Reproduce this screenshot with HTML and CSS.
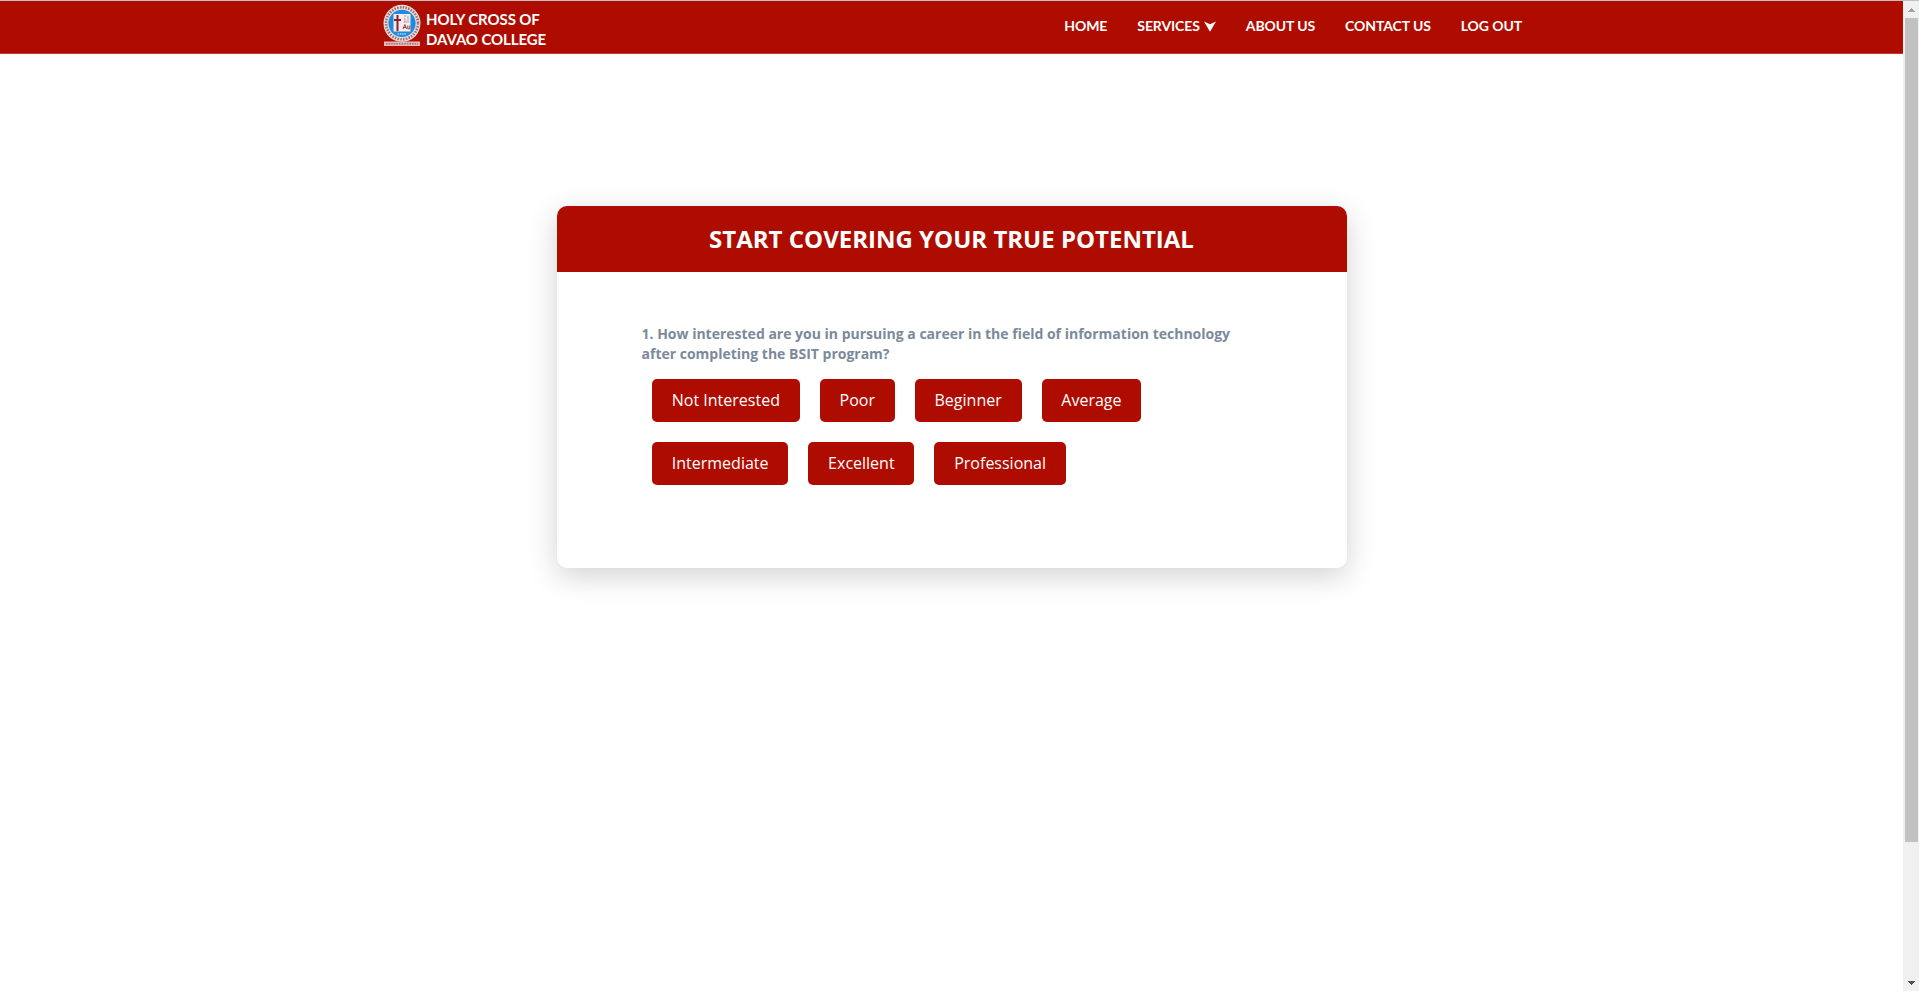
FILE: index.html
```html
<!DOCTYPE html>
<html lang="en">
<head>
<meta charset="utf-8">
<title>Holy Cross of Davao College</title>
<link rel="stylesheet" href="styles.css">
</head>
<body>
<div class="window">
  <div class="page">
    <header class="navbar">
      <a class="brand">
        <svg class="seal" viewBox="0 0 38 44" width="38" height="44">
          <circle cx="19" cy="19.3" r="18.5" fill="#e9dcdc"/>
          <circle cx="19" cy="19.3" r="16" fill="none" stroke="#9c6a72" stroke-width="2.6" stroke-dasharray="1.5 1.3"/>
          <circle cx="19" cy="19.3" r="13.6" fill="#1c8be0"/>
          <path d="M10.500 10h17v17.500h-17z" fill="#f4ecee"/>
          <path d="M14.500 11v16M11 16h7" stroke="#8d1f28" stroke-width="2"/>
          <path d="M21 12h2.500M25 12v5M22 14v4M20.500 18h6" stroke="#b9a3ad" stroke-width="1"/>
          <path d="M20 25l1.800-4.500 1.800 4.500M20.500 23.500h2.500M24.800 21.500v3.300h2v-3.300" fill="none" stroke="#a33a45" stroke-width="1"/>
          <path d="M14.500 30h9" stroke="#8fc4ee" stroke-width="1.800" stroke-dasharray="1.500 .8"/>
          <rect x="1" y="37.500" width="36" height="4.500" fill="#dfb9ba"/>
          <path d="M3 39.800h32" stroke="#bb6a6e" stroke-width="1.600" stroke-dasharray="1.600 1"/>
        </svg>
        <span class="brand-name">HOLY CROSS OF<br>DAVAO COLLEGE</span>
      </a>
      <nav class="links">
        <a class="link home">HOME</a>
        <a class="link services">SERVICES<svg class="caret" viewBox="0 0 12 11" width="12" height="11"><path d="M0 0.500L6 3.300L12 0.500L6 10.800z" fill="#fff"/></svg></a>
        <a class="link about">ABOUT US</a>
        <a class="link contact">CONTACT US</a>
        <a class="link logout">LOG OUT</a>
      </nav>
    </header>
    <main class="card">
      <h1 class="card-title">START COVERING YOUR TRUE POTENTIAL</h1>
      <div class="card-body">
        <p class="question">1. How interested are you in pursuing a career in the field of information technology<br>after completing the BSIT program?</p>
        <div class="answers">
          <button class="answer">Not Interested</button>
          <button class="answer">Poor</button>
          <button class="answer">Beginner</button>
          <button class="answer">Average</button>
          <button class="answer">Intermediate</button>
          <button class="answer">Excellent</button>
          <button class="answer">Professional</button>
        </div>
      </div>
    </main>
  </div>
  <div class="scrollbar">
    <svg class="arrow" viewBox="0 0 7 4" width="7" height="4" shape-rendering="crispEdges"><path d="M3 0h1v1h1v1h1v1h1v1H0V3h1V2h1V1h1z" fill="#a3a3a3"/></svg>
    <div class="thumb"></div>
    <svg class="arrow" viewBox="0 0 7 4" width="7" height="4" shape-rendering="crispEdges"><path d="M0 0h7v1H6v1H5v1H4v1H3V3H2V2H1V1H0z" fill="#505050"/></svg>
  </div>
</div>
</body>
</html>
```
FILE: styles.css
```css
* { box-sizing: border-box; }
body { margin: 0; background: #fff; font-family: "Open Sans", sans-serif; overflow: hidden; }
.window { display: flex; height: 991px; border-top: 1px solid #c2c0c0; }
.page { flex: 1; min-width: 0; }

.navbar {
  display: flex;
  justify-content: space-between;
  height: 53px;
  padding: 0 381px 0 383px;
  background: #af0c00;
  border-bottom: 1px solid #c43a30;
  color: #fff;
  font-family: Lato, sans-serif;
  font-weight: 700;
}
.brand { display: flex; gap: 5px; }
.seal { display: block; margin-top: 3px; }
.brand-name { padding-top: 8px; font-size: 15px; line-height: 20px; letter-spacing: -0.1px; white-space: nowrap; }
.links { display: flex; align-items: flex-start; gap: 30px; padding-top: 15px; font-size: 14px; line-height: 20px; letter-spacing: -0.1px; white-space: nowrap; }
.link { display: flex; align-items: center; }
.caret { margin: 0 0 0 4px; }

.card {
  width: 790px;
  height: 362px;
  margin: 152px 0 0 557px;
  border-radius: 10px;
  overflow: hidden;
  background: #fff;
  box-shadow: 0 8px 30px rgba(0, 0, 0, 0.18);
}
.card-title {
  margin: 0;
  height: 66px;
  padding-right: 1px;
  background: #af0c00;
  color: #fff;
  font-size: 24px;
  font-weight: 700;
  line-height: 66px;
  text-align: center;
}
.card-body { padding: 52px 84px 0 84.5px; }
.question { margin: 0; color: #7b8a9a; font-size: 14px; font-weight: 700; line-height: 20px; white-space: nowrap; }
.answers { display: flex; flex-wrap: wrap; gap: 20px; width: 520px; padding: 15px 0 0 10.5px; }
.answer {
  height: 43px;
  padding: 0 19.8px;
  border: 0;
  border-radius: 5px;
  background: #af0c00;
  color: #fff;
  font: 400 16px/43px "Open Sans", sans-serif;
}

.scrollbar {
  display: flex;
  flex-direction: column;
  align-items: center;
  width: 16px;
  padding: 7px 0 6px;
  background: #f0f0f0;
}
.arrow { display: block; }
.thumb { width: 13px; height: 824px; margin: 6px 0 auto; background: #c1c1c1; }
```
